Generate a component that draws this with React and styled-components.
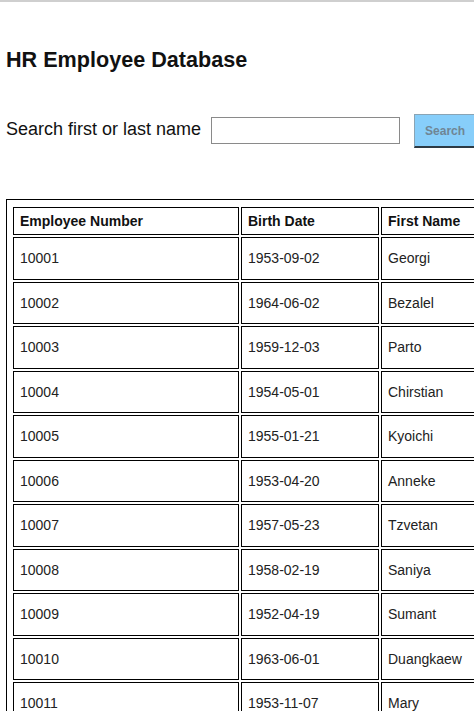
import React from "react";
import styled, { createGlobalStyle } from "styled-components";

const employees = [
  ["10001", "1953-09-02", "Georgi", "Facello", "M", "1986-06-26"],
  ["10002", "1964-06-02", "Bezalel", "Simmel", "F", "1985-11-21"],
  ["10003", "1959-12-03", "Parto", "Bamford", "M", "1986-08-28"],
  ["10004", "1954-05-01", "Chirstian", "Koblick", "M", "1986-12-01"],
  ["10005", "1955-01-21", "Kyoichi", "Maliniak", "M", "1989-09-12"],
  ["10006", "1953-04-20", "Anneke", "Preusig", "F", "1989-06-02"],
  ["10007", "1957-05-23", "Tzvetan", "Zielinski", "F", "1989-02-10"],
  ["10008", "1958-02-19", "Saniya", "Kalloufi", "M", "1994-09-15"],
  ["10009", "1952-04-19", "Sumant", "Peac", "F", "1985-02-18"],
  ["10010", "1963-06-01", "Duangkaew", "Piveteau", "F", "1989-08-24"],
  ["10011", "1953-11-07", "Mary", "Sluis", "F", "1990-01-22"],
  ["10012", "1960-10-04", "Patricio", "Bridgland", "M", "1992-12-18"],
];

const columns = [
  { label: "Employee Number", width: 212 },
  { label: "Birth Date", width: 124 },
  { label: "First Name", width: 124 },
  { label: "Last Name", width: 124 },
  { label: "Gender", width: 80 },
  { label: "Hire Date", width: 124 },
];

const App = () => {
  return (
    <Page>
      <GlobalStyle />
      <Title>HR Employee Database</Title>
      <SearchRow>
        <Label htmlFor="search">Search first or last name</Label>
        <SearchInput id="search" type="text" />
        <SearchBtn disabled>Search</SearchBtn>
      </SearchRow>
      <Table>
        <thead>
          <tr>
            {columns.map((col) => (
              <Th key={col.label} $width={col.width}>{col.label}</Th>
            ))}
          </tr>
        </thead>
        <tbody>
          {employees.map((row) => (
            <tr key={row[0]}>
              {row.map((value, i) => (
                <Td key={i}>{value}</Td>
              ))}
            </tr>
          ))}
        </tbody>
      </Table>
    </Page>
  );
};

export default App;

const GlobalStyle = createGlobalStyle`
  html, body {
    margin: 0;
    overflow: hidden;
    background: #fff;
  }
  body {
    font-family: "Liberation Sans", Arial, sans-serif;
    color: #111;
  }
`;

const Page = styled.div`
  border-top: 2px solid #cfcfcf;
  padding: 0 6px;
  width: 900px;
`;

const Title = styled.h1`
  font-size: 21.6px;
  font-weight: 700;
  margin: 45px 0 0;
  line-height: 26px;
`;

const SearchRow = styled.div`
  display: flex;
  align-items: flex-start;
  margin-top: 41px;
`;

const Label = styled.label`
  font-size: 18px;
  line-height: 22px;
  margin: 4px 10px 0 0;
`;

const SearchInput = styled.input`
  width: 183px;
  height: 23px;
  border: 1px solid #8a8a8a;
  padding: 1px 2px;
  margin: 3px 0 0;
`;

const SearchBtn = styled.button`
  margin-left: 14px;
  width: 80px;
  height: 34px;
  background: #87cefa;
  border: 1px solid #8aa4b4;
  border-bottom: 2px solid #2c3a44;
  border-right: 2px solid #2c3a44;
  color: #6f8594;
  font-family: "Liberation Sans", Arial, sans-serif;
  font-size: 12px;
  font-weight: 700;
  text-align: left;
  padding: 0 0 0 10px;
`;

const Table = styled.table`
  margin-top: 51px;
  border: 1px solid #000;
  border-spacing: 2px;
  padding: 5px 4px;
  font-size: 14px;
  color: #222;
`;

const Th = styled.th`
  width: ${(p) => p.$width}px;
  border: 1px solid #000;
  padding: 5px 6px;
  line-height: 16px;
  text-align: left;
  font-weight: 700;
  color: #111;
`;

const Td = styled.td`
  border: 1px solid #000;
  padding: 12px 6px;
  line-height: 16.5px;
  text-align: left;
`;
